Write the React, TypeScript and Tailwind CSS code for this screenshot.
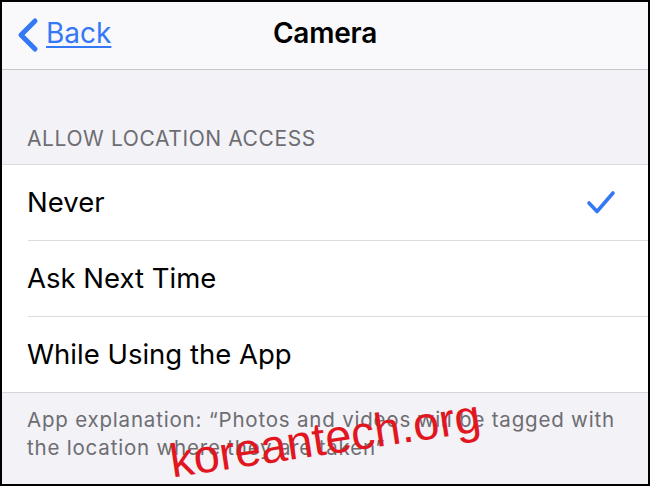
import React from "react";

const font = { fontFamily: "Inter, 'Noto Sans', 'Liberation Sans', sans-serif" };

function Row({ label, checked, last }: { label: string; checked?: boolean; last?: boolean }) {
  return (
    <div className={`relative flex h-[76px] items-center pl-[25px] ${last ? "border-b border-[#d6d6da]" : ""}`}>
      <span className="text-[27.5px] leading-none text-black">{label}</span>
      {checked && (
        <svg className="absolute right-[32px] top-[25px]" width="30" height="26" viewBox="0 0 30 26">
          <path d="M3 13 L11 21.5 L27 3" fill="none" stroke="#3478f6" strokeWidth="3.6" strokeLinecap="round" strokeLinejoin="round" />
        </svg>
      )}
      {!last && <div className="absolute bottom-0 left-[26px] right-0 h-px bg-[#dcdce0]" />}
    </div>
  );
}

export default function App() {
  return (
    <div className="relative h-[486px] w-[650px] overflow-hidden border-2 border-black bg-[#f2f2f7]" style={font}>
      {/* Nav bar */}
      <div className="relative flex h-[68px] items-center border-b border-[#c6c6ca] bg-[#f9f9fb]">
        <div className="flex items-center pl-[14px]">
          <svg width="24" height="38" viewBox="0 0 24 38">
            <path d="M19 4 L5 18 L19 32" fill="none" stroke="#3478f6" strokeWidth="5" strokeLinecap="round" strokeLinejoin="round" />
          </svg>
          <span className="ml-[6px] mt-[-6px] text-[28px] leading-none text-[#3478f6] underline decoration-[1.5px] underline-offset-[3px]">Back</span>
        </div>
        <div className="absolute inset-x-0 top-0 flex h-full items-center justify-center">
          <span className="mt-[-6px] text-[28px] font-semibold leading-none tracking-[-0.2px] text-black">Camera</span>
        </div>
      </div>
      {/* Section header */}
      <div className="flex h-[94px] items-end pb-[13px] pl-[25px]">
        <span className="text-[21px] leading-[24px] tracking-[0.6px] text-[#6d6d72]">ALLOW LOCATION ACCESS</span>
      </div>
      {/* List */}
      <div className="border-t border-[#dcdce0] bg-white">
        <Row label="Never" checked />
        <Row label="Ask Next Time" />
        <Row label="While Using the App" last />
      </div>
      {/* Footer */}
      <div className="pl-[25px] pt-[13px] text-[20.5px] leading-[28px] tracking-[0.8px] text-[#6d6d72] whitespace-nowrap">
        App explanation: “Photos and videos will be tagged with
        <br />
        the location where they are taken”
      </div>
      {/* Watermark */}
      <div
        className="absolute left-[323px] top-[436px] whitespace-nowrap text-[47px] leading-none text-[#e2161f]"
        style={{ fontFamily: "'Liberation Sans', Arial, sans-serif", transform: "translate(-50%, -50%) rotate(-8.5deg)" }}
      >
        koreantech.org
      </div>
    </div>
  );
}
